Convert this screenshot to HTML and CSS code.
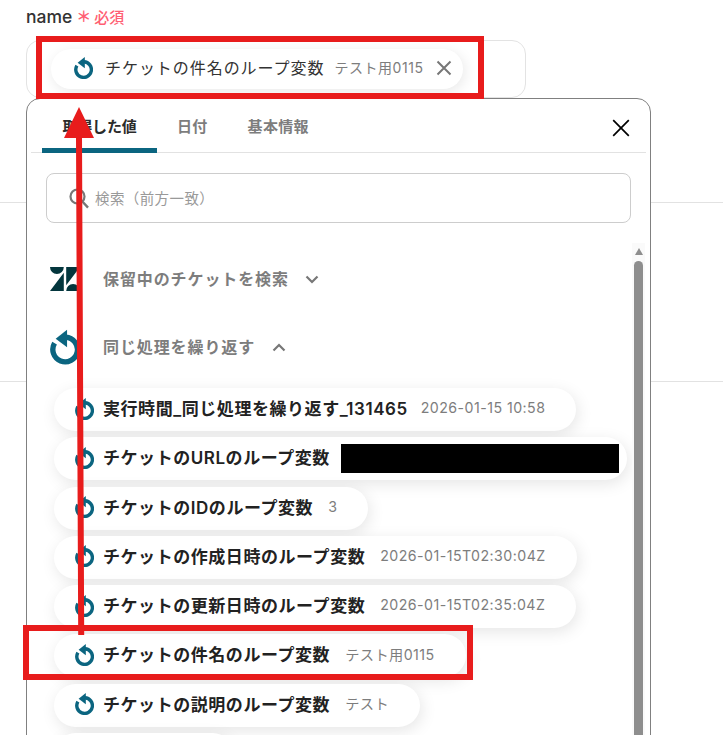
FILE: index.html
```html
<!DOCTYPE html>
<html lang="ja">
<head>
<meta charset="utf-8">
<title>name</title>
<link rel="stylesheet" href="styles.css">
</head>
<body>
<svg class="defs" width="0" height="0" aria-hidden="true">
  <symbol id="loop" viewBox="0 0 19 22">
    <path d="M10 4.8A7.8 7.8 0 1 1 2.9 8.6" fill="none" stroke="#0b6580" stroke-width="3.4"/>
    <path d="M10.8 0V11.2L3.6 5.8Z" fill="#0b6580"/>
  </symbol>
</svg>
<main class="page">
  <div class="label-row">
    <span class="label">name</span>
    <span class="star">＊</span>
    <span class="required">必須</span>
  </div>
  <div class="field">
    <div class="chip chip-field">
      <svg class="icon"><use href="#loop"/></svg>
      <span class="title title-field">チケットの件名のループ変数</span>
      <span class="value value-field">テスト用0115</span>
      <svg class="chip-x" viewBox="0 0 16 16"><path d="M1.5 1.5L14.5 14.5M14.5 1.5L1.5 14.5" stroke="#777" stroke-width="2" fill="none"/></svg>
    </div>
  </div>
  <div class="rule rule-a"></div>
  <div class="rule rule-b"></div>
</main>

<section class="popup">
  <div class="tabs">
    <span class="tab tab-active">取得した値</span>
    <span class="tab tab-date">日付</span>
    <span class="tab tab-info">基本情報</span>
    <svg class="close" viewBox="0 0 18 18"><path d="M1.2 1.2L16.8 16.8M16.8 1.2L1.2 16.8" stroke="#000" stroke-width="1.7" fill="none"/></svg>
  </div>
  <div class="search">
    <svg class="search-icon" viewBox="0 0 20 21"><circle cx="8.5" cy="8.5" r="7" fill="none" stroke="#777" stroke-width="2.2"/><path d="M13.6 13.8L19 19.6" stroke="#777" stroke-width="2.4" fill="none"/></svg>
    <span class="placeholder">検索（前方一致）</span>
  </div>
  <div class="scroll-area">
    <div class="list">
      <div class="section">
        <svg class="logo" viewBox="0 0 30 24"><path d="M0 0H13.8A6.9 6.9 0 0 1 0 0Z M13.8 5.8V24H0Z M16.2 0H30L16.2 18.2Z M16.2 24A6.9 6.9 0 0 1 30 24Z" fill="#03363d"/></svg>
        <span class="section-title">保留中のチケットを検索</span>
        <svg class="chev" viewBox="0 0 14 9"><path d="M1.5 1.5L7 7L12.5 1.5" fill="none" stroke="#777" stroke-width="2.2"/></svg>
      </div>
      <div class="section">
        <svg class="logo logo-loop"><use href="#loop"/></svg>
        <span class="section-title">同じ処理を繰り返す</span>
        <svg class="chev" viewBox="0 0 14 9"><path d="M1.5 7.5L7 2L12.5 7.5" fill="none" stroke="#777" stroke-width="2.2"/></svg>
      </div>
      <div class="chips">
        <div class="chip"><svg class="icon"><use href="#loop"/></svg><span class="title">実行時間_同じ処理を繰り返す_131465</span><span class="value value-time">2026-01-15 10:58</span></div>
        <div class="chip chip-redacted"><svg class="icon"><use href="#loop"/></svg><span class="title">チケットのURLのループ変数</span><span class="redaction"></span></div>
        <div class="chip"><svg class="icon"><use href="#loop"/></svg><span class="title">チケットのIDのループ変数</span><span class="value">3</span></div>
        <div class="chip"><svg class="icon"><use href="#loop"/></svg><span class="title">チケットの作成日時のループ変数</span><span class="value">2026-01-15T02:30:04Z</span></div>
        <div class="chip"><svg class="icon"><use href="#loop"/></svg><span class="title">チケットの更新日時のループ変数</span><span class="value">2026-01-15T02:35:04Z</span></div>
        <div class="chip"><svg class="icon"><use href="#loop"/></svg><span class="title">チケットの件名のループ変数</span><span class="value">テスト用0115</span></div>
        <div class="chip"><svg class="icon"><use href="#loop"/></svg><span class="title">チケットの説明のループ変数</span><span class="value">テスト</span></div>
        <div class="chip chip-empty"></div>
      </div>
    </div>
    <div class="scrollbar">
      <span class="scroll-up"></span>
      <span class="thumb"></span>
    </div>
  </div>
</section>

<div class="mark mark-top"></div>
<div class="mark mark-bottom"></div>
<svg class="arrow" viewBox="0 0 40 530"><path d="M15 30L17.2 528H23.2L21 30Z M18 0L3 31H33Z" fill="#e81c1c"/></svg>
</body>
</html>
```

FILE: styles.css
```css
* { box-sizing: border-box; }
html, body { margin: 0; height: 100%; overflow: hidden; background: #fff; }
body { position: relative; font-family: Inter, "Noto Sans CJK JP", sans-serif; color: #2b2b2b; }
.defs { position: absolute; }

.page { padding: 4px 0 0 26px; display: flex; flex-direction: column; }
.label-row { display: flex; align-items: center; height: 24px; margin-bottom: 12px; }
.label { font-size: 17.5px; font-weight: 500; color: #333; }
.star { color: #ff5f73; font-size: 15px; line-height: 22px; margin: 2px 3px 0 4px; font-weight: 700; }
.required { color: #ff5f73; font-size: 15px; font-weight: 500; }

.field { width: 500px; height: 58px; border: 1px solid #e3e3e3; border-radius: 14px; padding: 8px 24px; }
.rule { height: 1px; background: #e2e2e2; }
.rule-a { margin: 104px 0 0 -26px; }
.rule-b { margin: 178px 0 0 -26px; }

.chip { display: inline-flex; align-items: center; height: 43px; padding: 0 31px 0 21px; border-radius: 22px; background: #fff; box-shadow: 2px 4px 16px rgba(0,0,0,.1); flex: none; }
.chip-field { height: 40px; padding: 0 11px 0 23px; box-shadow: 2px 3px 14px rgba(0,0,0,.09); }
.icon { width: 19px; height: 22px; flex: none; margin: 0 9px 2px 0; }
.chip-field .icon { margin-right: 12px; }
.title { font-size: 17px; font-weight: 600; letter-spacing: .55px; color: #222; white-space: nowrap; padding-bottom: 4px; }
.title-field { font-size: 16px; font-weight: 400; letter-spacing: .95px; color: #333; }
.value { font-size: 14.2px; letter-spacing: .45px; color: #7d7d7d; margin-left: 15px; white-space: nowrap; padding-bottom: 4px; }
.value-field { font-size: 14px; letter-spacing: .55px; margin-left: 10px; }
.value-time { margin-left: 13px; }
.chip-x { width: 16px; height: 16px; margin: 0 0 2px 12px; flex: none; }
.chip-redacted { padding-right: 8px; }
.redaction { width: 278px; height: 29px; background: #000; margin-left: 11px; flex: none; }
.chip-empty { width: 180px; }

.popup { position: absolute; left: 26px; top: 98px; width: 625px; height: 700px; background: #fff; border: 1px solid #808080; border-radius: 14px; }
.tabs { position: relative; display: flex; height: 54px; margin: 0 4px; border-bottom: 1px solid #e2e2e2; }
.tab { font-size: 15px; font-weight: 600; letter-spacing: .3px; color: #7d7d7d; padding-top: 16px; height: 54px; text-align: center; }
.tab-active { width: 115px; margin-left: 11px; color: #2b2b2b; letter-spacing: -.2px; border-bottom: 5px solid #0b6580; border-radius: 4px 4px 0 0; }
.tab-date { margin-left: 20px; }
.tab-info { margin-left: 40px; }
.close { position: absolute; right: 16px; top: 20px; width: 18px; height: 18px; }

.search { display: flex; align-items: center; height: 50px; margin: 20px 19px 0; border: 1px solid #cdcdcd; border-radius: 8px; padding-left: 22px; }
.search-icon { width: 20px; height: 21px; flex: none; margin-right: 6px; }
.placeholder { font-size: 14.5px; color: #999; letter-spacing: .4px; padding-bottom: 2px; }

.scroll-area { display: flex; margin-top: 20px; }
.list { flex: 1; min-width: 0; padding: 2px 0 0 23px; }
.section { display: flex; align-items: center; height: 68px; }
.logo { width: 30px; height: 24px; flex: none; margin-right: 23px; }
.logo-loop { width: 30px; height: 36px; }
.section-title { font-size: 16px; font-weight: 600; letter-spacing: .9px; color: #7d7d7d; padding-bottom: 2px; }
.chev { width: 14px; height: 9px; margin-left: 16.5px; flex: none; }

.chips { display: flex; flex-direction: column; align-items: flex-start; gap: 6.25px; margin: 7px 0 0 4px; }

.scrollbar { width: 13px; margin: 0 5px 0 0; background: #fafafa; display: flex; flex-direction: column; align-items: center; padding-top: 5px; flex: none; }
.scroll-up { width: 0; height: 0; border-left: 4.5px solid transparent; border-right: 4.5px solid transparent; border-bottom: 7px solid #8e8e8e; }
.thumb { width: 9px; height: 600px; margin-top: 6px; background: #8e8e8e; border-radius: 5px 5px 0 0; }

.mark { position: absolute; border: 6px solid #e81c1c; }
.mark-top { left: 36px; top: 36px; width: 448px; height: 63px; }
.mark-bottom { left: 23px; top: 625px; width: 450px; height: 55px; }
.arrow { position: absolute; left: 61px; top: 107px; width: 40px; height: 530px; }
```
